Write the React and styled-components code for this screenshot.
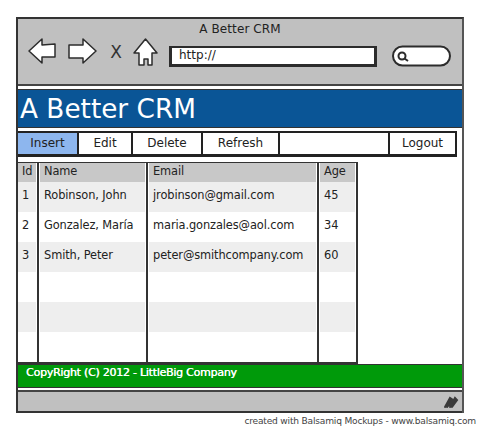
import React from 'react';
import styled, { createGlobalStyle } from 'styled-components';

const GlobalStyle = createGlobalStyle`
  html, body {
    margin: 0;
    padding: 0;
    background: #fff;
  }
  body {
    font-family: "DejaVu Sans", sans-serif;
    color: #222;
  }
`;

const Page = styled.div`
  width: 480px;
  height: 430px;
  padding: 17px 0 0 16px;
  box-sizing: border-box;
  overflow: hidden;
`;

const Window = styled.div`
  width: 448px;
  box-sizing: border-box;
  border-top: 2px solid #333;
  border-left: 2px solid #333;
  border-right: 2px solid #555;
  background: #fff;
`;

const Chrome = styled.div`
  height: 67px;
  box-sizing: border-box;
  background: #c0c0c0;
  border-bottom: 2px solid #444;
  padding-top: 1px;
`;

const Title = styled.div`
  height: 18px;
  line-height: 18px;
  text-align: center;
  font-size: 12px;
  letter-spacing: 0.1px;
`;

const Tools = styled.div`
  display: flex;
  align-items: flex-start;
  height: 29px;
  padding-left: 10px;
`;

const IconSlot = styled.svg`
  display: block;
  flex: none;
  margin-right: ${p => p.$gap || 0}px;
  margin-top: ${p => p.$top || 0}px;
`;

const Stop = styled.span`
  font-size: 17px;
  line-height: 28px;
  width: 14px;
  margin-right: 10px;
  text-align: center;
  color: #333;
`;

const UrlBox = styled.div`
  width: 208px;
  height: 21px;
  box-sizing: border-box;
  margin: 8px 15px 0 11px;
  padding-left: 7px;
  background: #fff;
  border: 2px solid #2c2c2c;
  border-width: 2px 3px 3px 3px;
  font-size: 12px;
  line-height: 15px;
`;

const Banner = styled.div`
  height: 39px;
  margin-top: 3px;
  padding-left: 2px;
  background: #0a5596;
  border-top: 1px solid #333;
  border-bottom: 1px solid #333;
  box-sizing: border-box;
  color: #fff;
  font-size: 26.3px;
  line-height: 38px;
`;

const Nav = styled.div`
  display: flex;
  width: 439px;
  height: 26px;
  margin-top: 3px;
  box-sizing: border-box;
  border-bottom: 3px solid #222;
  border-top: 2px solid #222;
`;

const NavButton = styled.div`
  width: ${p => p.$w}px;
  flex: none;
  box-sizing: border-box;
  background: ${p => (p.$active ? '#8db6ee' : '#fff')};
  border-right: 2px solid #222;
  font-size: 12px;
  line-height: 20px;
  text-align: center;
`;

const Table = styled.div`
  display: grid;
  grid-template-columns: 21px 109px 171px 39px;
  width: 340px;
  margin-top: 5px;
  box-sizing: border-box;
  border-top: 1px solid #333;
  border-bottom: 2px solid #333;
`;

const Column = styled.div`
  border-right: 2px solid #333;
  padding-left: ${p => (p.$first ? 0 : 1)}px;
`;

const Cell = styled.div`
  height: ${p => (p.$head ? 19 : 30)}px;
  box-sizing: border-box;
  padding-left: 4px;
  margin-right: 1px;
  background: ${p => (p.$head ? '#c8c8c8' : p.$odd ? '#eeeeee' : '#fff')};
  font-size: 11.4px;
  letter-spacing: -0.1px;
  line-height: ${p => (p.$head ? 17 : 26)}px;
  white-space: nowrap;
`;

const Footer = styled.div`
  height: 24px;
  box-sizing: border-box;
  padding-left: 8px;
  background: #009a0a;
  border-top: 1px solid #333;
  border-bottom: 1px solid #333;
  color: #fff;
  font-size: 11px;
  letter-spacing: -0.25px;
  line-height: 16px;
  text-shadow: 0.3px 0 0 #fff;
`;

const StatusBar = styled.div`
  display: flex;
  justify-content: flex-end;
  align-items: center;
  height: 23px;
  margin-top: 2px;
  padding-right: 3px;
  box-sizing: border-box;
  background: #c0c0c0;
  border-top: 2px solid #444;
  border-bottom: 2px solid #333;
`;

const Credit = styled.div`
  width: 460px;
  text-align: right;
  font-size: 9.1px;
  letter-spacing: -0.2px;
  line-height: 16px;
  color: #444;
`;

const BackIcon = () => (
  <IconSlot width="28" height="26" viewBox="0 0 28 26" $gap={12}>
    <path d="M1 13 L14 1 L14 7 L27 6 L27 19 L14 19 L14 25 Z" fill="#fff" stroke="#2c2c2c" strokeWidth="1.5" strokeLinejoin="round" />
  </IconSlot>
);

const ForwardIcon = () => (
  <IconSlot width="29" height="26" viewBox="0 0 29 26" $gap={12}>
    <path d="M28 13 L15 1 L15 7 L1 7 L1 20 L15 20 L15 25 Z" fill="#fff" stroke="#2c2c2c" strokeWidth="1.5" strokeLinejoin="round" />
  </IconSlot>
);

const HomeIcon = () => (
  <IconSlot width="25" height="28" viewBox="0 0 25 28">
    <path d="M12.5 1 L24 15 L19 15 L19 27 L15 27 L15 21 L11 21 L11 27 L6 27 L6 15 L1 15 Z" fill="#fff" stroke="#2c2c2c" strokeWidth="1.5" strokeLinejoin="round" />
  </IconSlot>
);

const SearchPill = () => (
  <IconSlot width="60" height="22" viewBox="0 0 60 22" $top={7}>
    <rect x="1" y="1.5" width="57" height="19" rx="9.5" fill="#fff" stroke="#2c2c2c" strokeWidth="2" />
    <circle cx="10" cy="11" r="3.5" fill="none" stroke="#2c2c2c" strokeWidth="2" />
    <path d="M12.5 13.5 L16 16" stroke="#2c2c2c" strokeWidth="2" />
  </IconSlot>
);

const Grip = () => (
  <IconSlot width="16" height="14" viewBox="0 0 16 14">
    <path d="M2 12 L7 3 L10 5 L4 12 M7 12 L12 3 L14 5 L9 12" fill="#3a3a3a" stroke="#3a3a3a" strokeWidth="2" strokeLinecap="round" />
  </IconSlot>
);

const columns = [
  { head: 'Id', cells: ['1', '2', '3'] },
  { head: 'Name', cells: ['Robinson, John', 'Gonzalez, María', 'Smith, Peter'] },
  { head: 'Email', cells: ['jrobinson@gmail.com', 'maria.gonzales@aol.com', 'peter@smithcompany.com'] },
  { head: 'Age', cells: ['45', '34', '60'] },
];

const rowCount = 6;

const App = () => {
  return (
    <Page>
      <GlobalStyle />
      <Window>
        <Chrome>
          <Title>A Better CRM</Title>
          <Tools>
            <BackIcon />
            <ForwardIcon />
            <Stop>X</Stop>
            <HomeIcon />
            <UrlBox>http://</UrlBox>
            <SearchPill />
          </Tools>
        </Chrome>
        <Banner>A Better CRM</Banner>
        <Nav>
          <NavButton $w={61} $active>Insert</NavButton>
          <NavButton $w={54}>Edit</NavButton>
          <NavButton $w={70}>Delete</NavButton>
          <NavButton $w={77}>Refresh</NavButton>
          <NavButton $w={110} />
          <NavButton $w={67}>Logout</NavButton>
        </Nav>
        <Table>
          {columns.map((col, c) => (
            <Column key={col.head} $first={c === 0}>
              <Cell $head>{col.head}</Cell>
              {Array.from({ length: rowCount }).map((_, r) => (
                <Cell key={r} $odd={r % 2 === 0}>
                  {col.cells[r]}
                </Cell>
              ))}
            </Column>
          ))}
        </Table>
        <Footer>CopyRight (C) 2012 - LittleBig Company</Footer>
        <StatusBar>
          <Grip />
        </StatusBar>
      </Window>
      <Credit>created with Balsamiq Mockups - www.balsamiq.com</Credit>
    </Page>
  );
};

export default App;
